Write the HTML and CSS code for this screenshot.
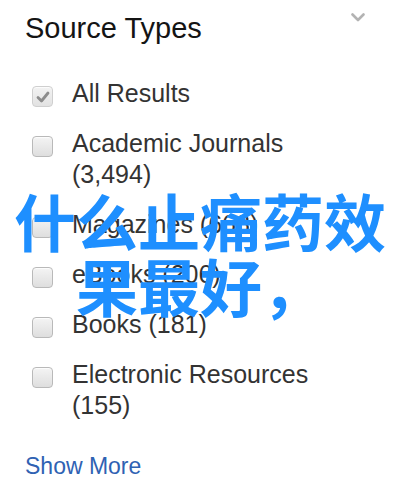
FILE: index.html
```html
<!DOCTYPE html>
<html>
<head>
<meta charset="utf-8">
<link rel="stylesheet" href="styles.css">
</head>
<body>
<div class="panel">
  <div class="header">
    <h2 class="title">Source Types</h2>
    <svg class="chevron" width="14" height="9" viewBox="0 0 14 9"><path d="M1.5 1.5 L7 7 L12.5 1.5" fill="none" stroke="#b3b3b3" stroke-width="2.6" stroke-linecap="round" stroke-linejoin="round"/></svg>
  </div>
  <ul class="list">
    <li class="item"><span class="box checked"><svg width="14" height="12" viewBox="0 0 14 12"><path d="M2 6.5 L5.5 10 L12 2" fill="none" stroke="#8c8c8c" stroke-width="2.8" stroke-linecap="round" stroke-linejoin="round"/></svg></span><span class="label">All Results</span></li>
    <li class="item"><span class="box"></span><span class="label">Academic Journals (3,494)</span></li>
    <li class="item"><span class="box"></span><span class="label">Magazines (668)</span></li>
    <li class="item"><span class="box"></span><span class="label">eBooks (206)</span></li>
    <li class="item"><span class="box"></span><span class="label">Books (181)</span></li>
    <li class="item"><span class="box"></span><span class="label">Electronic Resources (155)</span></li>
  </ul>
  <a class="more" href="#">Show More</a>
  <div class="overlay">什么止痛药效<br>果最好，</div>
</div>
</body>
</html>
```
FILE: styles.css
```css
html, body {
  margin: 0;
  padding: 0;
  background: #ffffff;
}
.panel {
  position: relative;
  width: 400px;
  height: 500px;
  overflow: hidden;
  padding: 12px 0 0 25px;
  box-sizing: border-box;
  font-family: "Liberation Sans", Arial, sans-serif;
}
.header {
  display: flex;
  justify-content: space-between;
  align-items: flex-start;
  padding-right: 35px;
}
.title {
  margin: 0;
  font-size: 29px;
  line-height: 33px;
  font-weight: normal;
  color: #141414;
}
.chevron {
  margin-top: 1px;
}
.list {
  list-style: none;
  margin: 33px 0 32px 0;
  padding: 0 50px 0 7px;
  display: flex;
  flex-direction: column;
  gap: 19px;
}
.item {
  display: flex;
  align-items: flex-start;
  gap: 19px;
}
.box {
  flex: none;
  width: 19px;
  height: 19px;
  margin-top: 8px;
  border: 1px solid #b9b9b9;
  border-radius: 4px;
  background: linear-gradient(#f4f4f4, #dedede);
  box-shadow: inset 0 1px 1px rgba(255,255,255,0.8);
  display: flex;
  align-items: center;
  justify-content: center;
}
.box.checked {
  background: linear-gradient(#f2f2f2, #e2e2e2);
  border-color: #cfcfcf;
}
.label {
  font-size: 25px;
  line-height: 31px;
  color: #333333;
}
.more {
  display: block;
  font-size: 23px;
  line-height: 26px;
  color: #2f62b3;
  text-decoration: none;
}
.overlay {
  position: absolute;
  left: 0;
  right: 0;
  top: 188px;
  text-align: center;
  font-family: "Noto Sans CJK SC", sans-serif;
  font-weight: 700;
  font-size: 62px;
  line-height: 65px;
  color: #1e8fff;
}
```
